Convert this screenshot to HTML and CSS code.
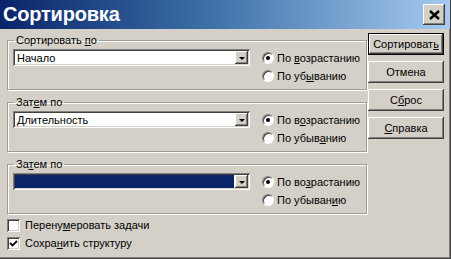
FILE: index.html
```html
<!DOCTYPE html>
<html lang="ru">
<head>
  <meta charset="UTF-8" />
  <title>Сортировка</title>
  <link rel="stylesheet" href="styles.css">
</head>
<body>
  <div class="window">
    <div class="titlebar">
      <span class="title">Сортировка</span>
      <span class="close">
        <svg width="11" height="10" viewBox="0 0 11 10"><path d="M1 1 L10 9 M10 1 L1 9" stroke="#000" stroke-width="2.4"/></svg>
      </span>
    </div>
    <div class="content">
      <div class="left">
        <fieldset class="group">
          <legend>Сортировать <u>п</u>о</legend>
          <div class="group-body">
            <div class="combo"><span class="combo-text">Начало</span><span class="drop"><i></i></span></div>
            <div class="radios">
              <div class="radio-row"><span class="radio checked"></span><span>По <u>в</u>озрастанию</span></div>
              <div class="radio-row"><span class="radio"></span><span>По уб<u>ы</u>ванию</span></div>
            </div>
          </div>
        </fieldset>
        <fieldset class="group">
          <legend>Зат<u>е</u>м по</legend>
          <div class="group-body">
            <div class="combo"><span class="combo-text">Длительность</span><span class="drop"><i></i></span></div>
            <div class="radios">
              <div class="radio-row"><span class="radio checked"></span><span>По в<u>о</u>зрастанию</span></div>
              <div class="radio-row"><span class="radio"></span><span>По убыв<u>а</u>нию</span></div>
            </div>
          </div>
        </fieldset>
        <fieldset class="group last">
          <legend>За<u>т</u>ем по</legend>
          <div class="group-body">
            <div class="combo selected"><span class="combo-text"></span><span class="drop"><i></i></span></div>
            <div class="radios">
              <div class="radio-row"><span class="radio checked"></span><span>По во<u>з</u>растанию</span></div>
              <div class="radio-row"><span class="radio"></span><span>По убыван<u>и</u>ю</span></div>
            </div>
          </div>
        </fieldset>
        <div class="check-row"><span class="check"></span><span>Перену<u>м</u>еровать задачи</span></div>
        <div class="check-row"><span class="check">
          <svg width="9" height="9" viewBox="0 0 9 9"><path d="M1 4 L3.5 6.5 L8 2" stroke="#000" stroke-width="1.8" fill="none"/></svg>
        </span><span>Сохра<u>н</u>ить структуру</span></div>
      </div>
      <div class="buttons">
        <button class="btn default">Сортироват<u>ь</u></button>
        <button class="btn">Отмена</button>
        <button class="btn">С<u>б</u>рос</button>
        <button class="btn"><u>С</u>правка</button>
      </div>
    </div>
  </div>
</body>
</html>
```

FILE: styles.css
```css
body {
  margin: 0;
  background: #d4d0c8;
  font-family: 'Liberation Sans', Arial, sans-serif;
  font-size: 11px;
  color: #000;
}
.window {
  width: 451px;
  height: 259px;
  box-sizing: border-box;
  border-right: 1px solid #404040;
  border-bottom: 1px solid #404040;
  box-shadow: inset -1px -1px 0 #808080;
}
.titlebar {
  height: 29px;
  background: linear-gradient(to right, #0a246a 0%, #3a6ea5 45%, #a6caf0 100%);
  display: flex;
  align-items: center;
  justify-content: space-between;
  padding: 0 5px 0 3px;
}
.title {
  color: #fff;
  font-weight: bold;
  font-size: 20px;
  letter-spacing: -0.2px;
}
.close {
  width: 22px;
  height: 21px;
  background: #d4d0c8;
  display: flex;
  align-items: center;
  justify-content: center;
  box-shadow: inset -1px -1px #404040, inset 1px 1px #fff, inset -2px -2px #808080;
}
.content {
  display: flex;
  padding: 4px 0 0 7px;
}
.left {
  width: 352px;
  padding-top: 1px;
}
.group {
  margin: 0 0 6px 0;
  padding: 0 6px 4px 5px;
  border: 1px solid #a09c94;
  box-shadow: 1px 1px 0 #fff, inset 1px 1px 0 #fff;
}
.group.last {
  margin-bottom: 2px;
}
.group legend {
  padding: 0 2px;
  margin-left: 1px;
  line-height: 12px;
}
.group-body {
  display: flex;
}
.combo {
  width: 237px;
  height: 17px;
  margin-top: 3px;
  box-sizing: border-box;
  background: #fff;
  display: flex;
  align-items: center;
  justify-content: space-between;
  padding: 2px;
  box-shadow: inset 1px 1px #808080, inset -1px -1px #fff, inset 2px 2px #404040, inset -2px -2px #d4d0c8;
}
.combo-text {
  padding-left: 2px;
}
.combo.selected .combo-text {
  flex: 1;
  align-self: stretch;
  background: #0a246a;
  margin-right: 1px;
}
.drop {
  width: 13px;
  height: 13px;
  background: #d4d0c8;
  display: flex;
  align-items: center;
  justify-content: center;
  box-shadow: inset -1px -1px #404040, inset 1px 1px #fff, inset -2px -2px #808080;
}
.drop i {
  width: 0;
  height: 0;
  border-left: 3px solid transparent;
  border-right: 3px solid transparent;
  border-top: 3px solid #000;
  margin-top: 1px;
}
.radios {
  margin-left: 12px;
  padding-top: 3px;
}
.radio-row {
  height: 18px;
  display: flex;
  align-items: center;
  white-space: nowrap;
}
.radio {
  width: 12px;
  height: 12px;
  box-sizing: border-box;
  border-radius: 50%;
  background: #fff;
  border: 1px solid;
  border-color: #808080 #fff #fff #808080;
  box-shadow: inset 1px 1px #404040;
  margin-right: 3px;
  display: flex;
  align-items: center;
  justify-content: center;
}
.radio.checked::after {
  content: "";
  width: 4px;
  height: 4px;
  border-radius: 50%;
  background: #000;
}
.check-row {
  height: 18px;
  display: flex;
  align-items: center;
}
.check {
  width: 13px;
  height: 13px;
  box-sizing: border-box;
  background: #fff;
  margin-right: 5px;
  display: flex;
  align-items: center;
  justify-content: center;
  box-shadow: inset 1px 1px #808080, inset -1px -1px #fff, inset 2px 2px #404040, inset -2px -2px #d4d0c8;
}
.buttons {
  margin-left: 9px;
  display: flex;
  flex-direction: column;
  gap: 6px;
}
.btn {
  width: 76px;
  height: 22px;
  padding: 0;
  border: none;
  background: #d4d0c8;
  font-family: inherit;
  font-size: 11px;
  color: #000;
  box-shadow: inset -1px -1px #404040, inset 1px 1px #fff, inset -2px -2px #808080;
}
.btn.default {
  box-shadow: inset 0 0 0 1px #000, inset -2px -2px #404040, inset 2px 2px #fff, inset -3px -3px #808080;
}
```
